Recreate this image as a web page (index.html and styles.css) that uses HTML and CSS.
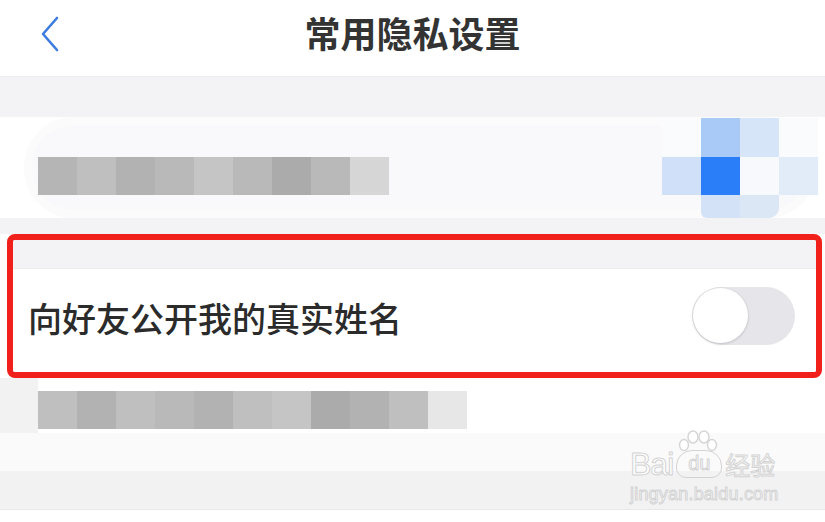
FILE: index.html
```html
<!DOCTYPE html>
<html lang="zh-CN">
<head>
    <meta charset="UTF-8">
    <meta name="viewport" content="width=device-width, initial-scale=1.0">
    <title>常用隐私设置</title>
    <link rel="stylesheet" href="styles.css">
</head>
<body>
    <div class="page">
        <header class="nav">
            <svg class="back" width="24" height="36" viewBox="0 0 24 36">
                <polyline points="18,2 4,18 18,34" fill="none" stroke="#3d7ce0" stroke-width="2.6" stroke-linecap="round" stroke-linejoin="round"/>
            </svg>
            <h1>常用隐私设置</h1>
        </header>

        <div class="band"></div>

        <!-- 账号行（已打码） -->
        <div class="row row-account">
            <div class="pill"></div>
            <div class="mosaic">
                <span class="g1"></span><span class="g2"></span><span class="g3"></span>
                <span class="g4"></span><span class="g5"></span><span class="g4"></span>
                <span class="g6"></span><span class="g4"></span><span class="g7"></span>
            </div>
            <div class="qr">
                <span class="b0"></span><span class="b1"></span><span class="b2"></span><span class="b0"></span>
                <span class="b3"></span><span class="b4"></span><span class="b5"></span><span class="b6"></span>
                <span></span><span class="b7"></span><span class="b8"></span><span></span>
            </div>
        </div>

        <div class="band band-sm"></div>

        <div class="highlight">
            <div class="band band-in"></div>
            <div class="row row-switch">
                <span class="label">向好友公开我的真实姓名</span>
                <div class="switch"><span class="knob"></span></div>
            </div>
        </div>

        <div class="row row-last">
            <div class="mosaic mosaic-wide">
                <span class="g2"></span><span class="g3"></span><span class="g2"></span>
                <span class="g4"></span><span class="g3"></span><span class="g2"></span>
                <span class="g5"></span><span class="g6"></span><span class="g3"></span>
                <span class="g2"></span><span class="g8"></span>
            </div>
        </div>
        <div class="fade-a"></div>
        <div class="fade-b"></div>

        <div class="watermark">
            <svg class="paw" width="40" height="22" viewBox="0 0 40 22">
                <g fill="#fff" stroke="#d6d6d6" stroke-width="1.5">
                    <ellipse cx="6" cy="15" rx="4.5" ry="5.5"/>
                    <ellipse cx="15" cy="7" rx="5" ry="6"/>
                    <ellipse cx="26" cy="7" rx="5" ry="6"/>
                    <ellipse cx="34" cy="15" rx="4.5" ry="5.5"/>
                </g>
            </svg>
            <div class="wm-main">
                <span class="bai">Bai</span>
                <span class="du">du</span>
                <span class="jy">经验</span>
            </div>
            <div class="wm-sub">jingyan.baidu.com</div>
        </div>
    </div>
</body>
</html>
```

FILE: styles.css
```css
body {
    margin: 0;
    font-family: "Noto Sans CJK SC", "Noto Sans", sans-serif;
    background: #fff;
}
.page {
    position: relative;
    width: 825px;
    height: 522px;
    overflow: hidden;
    background: #fff;
}
.nav {
    height: 76px;
    border-bottom: 1px solid #ececee;
    display: flex;
    align-items: center;
    justify-content: center;
    position: relative;
}
.back {
    position: absolute;
    left: 39px;
    top: 16px;
}
.nav h1 {
    margin: -12px 0 0 0;
    font-size: 36px;
    font-weight: 700;
    color: #333;
}
.band {
    height: 40px;
    background: #f3f3f5;
}
.band-sm {
    height: 16px;
}
.row {
    background: #fff;
    display: flex;
}
.row-account {
    height: 101px;
    position: relative;
    justify-content: space-between;
}
.pill {
    position: absolute;
    left: 24px;
    right: 8px;
    top: 0;
    bottom: 0;
    border-radius: 50px;
    background: #f9f9fb;
    box-shadow: inset 0 0 0 8px #fbfbfc;
}
.mosaic {
    position: relative;
    display: flex;
    margin: 40px 0 0 38px;
    height: 38px;
}
.mosaic span {
    width: 39px;
    height: 38px;
}
.g1 { background: #b5b5b5; }
.g2 { background: #bfbfbf; }
.g3 { background: #b2b2b2; }
.g4 { background: #b9b9b9; }
.g5 { background: #c5c5c5; }
.g6 { background: #ababab; }
.g7 { background: #d6d6d6; }
.g8 { background: #e7e7e7; }
.qr {
    position: relative;
    display: grid;
    grid-template-columns: repeat(4, 39px);
    grid-template-rows: 39px 38px 23px;
    margin: 1px 7px 0 0;
}
.b0 { background: #fafbfd; }
.b1 { background: #a9c9f7; }
.b2 { background: #d7e5f8; }
.b3 { background: #cfe0f8; }
.b4 { background: #2a7ef7; }
.b5 { background: #f7f9fc; }
.b6 { background: #e2ebf8; }
.b7 { background: #d3e2f6; border-radius: 0 0 0 6px; }
.b8 { background: #dce7f6; border-radius: 0 0 10px 0; }
.highlight {
    margin: 0 3px 0 7px;
    border: 6px solid #f2201a;
    border-radius: 8px;
    overflow: hidden;
}
.band-in {
    height: 28px;
    border-bottom: 1px solid #ececee;
}
.row-switch {
    height: 103px;
    align-items: center;
    justify-content: space-between;
    padding: 0 21px 0 15px;
}
.label {
    font-size: 34px;
    font-weight: 500;
    color: #2b2b2b;
    margin-top: -6px;
}
.switch {
    position: relative;
    width: 102px;
    height: 58px;
    border-radius: 29px;
    background: #e5e5ea;
    margin-top: -10px;
}
.knob {
    position: absolute;
    left: 0;
    top: 1px;
    width: 55px;
    height: 55px;
    border-radius: 50%;
    background: #fff;
    box-shadow: 0 1px 3px rgba(0,0,0,0.15), 0 0 0 1px #e2e2e6;
}
.row-last {
    height: 55px;
    background: linear-gradient(to right, #f2f2f2 0 38px, #fff 38px);
}
.row-last .mosaic {
    margin-top: 13px;
}
.fade-a {
    height: 38px;
    background: #fafafa;
}
.fade-b {
    height: 38px;
    background: #f2f2f3;
    border-bottom: 1px solid #e8e8e8;
}
.watermark {
    position: absolute;
    left: 630px;
    top: 430px;
    width: 152px;
    color: #fff;
    -webkit-text-stroke: 1px #d3d3d3;
    font-family: "Liberation Sans", sans-serif;
}
.paw {
    position: absolute;
    left: 48px;
    top: 0;
}
.wm-main {
    display: flex;
    align-items: center;
    gap: 3px;
    margin-top: 18px;
    height: 32px;
    line-height: 1;
}
.bai {
    font-size: 32px;
    letter-spacing: -1px;
}
.du {
    width: 44px;
    height: 26px;
    border: 1.5px solid #d3d3d3;
    border-radius: 16px 16px 10px 10px;
    font-size: 20px;
    text-align: center;
    line-height: 24px;
}
.jy {
    font-family: "Noto Sans CJK SC", sans-serif;
    font-size: 25px;
}
.wm-sub {
    font-size: 18px;
    letter-spacing: 0.2px;
    margin-top: 4px;
}
```
